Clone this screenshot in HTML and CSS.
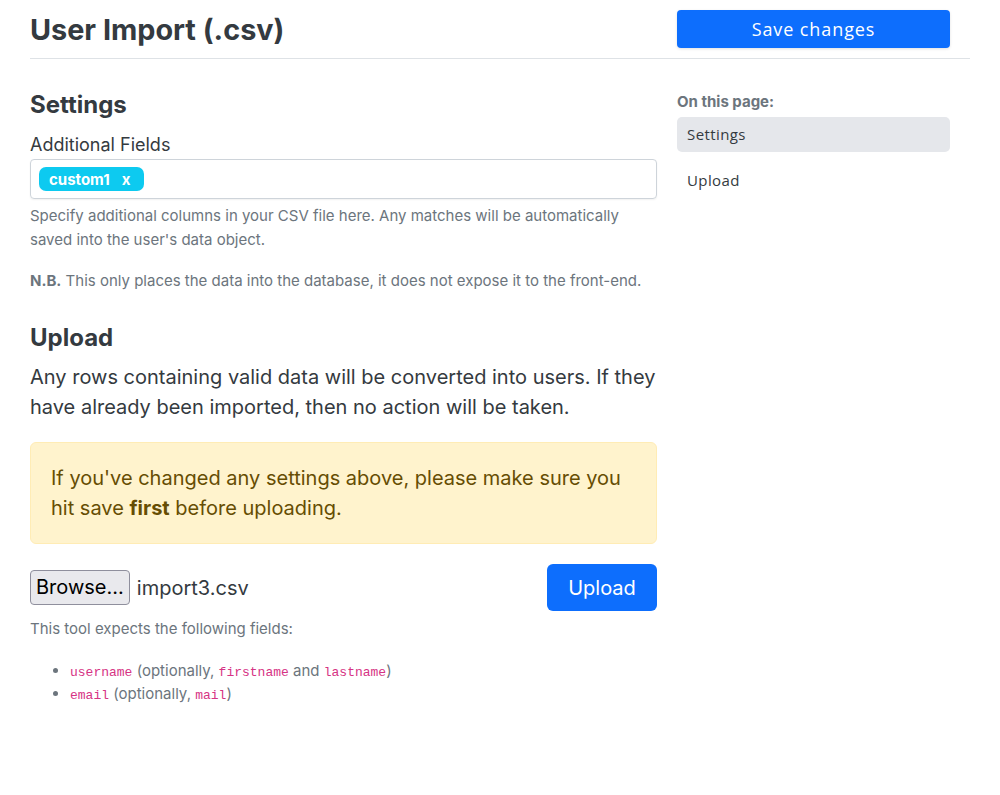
FILE: index.html
```html
<!DOCTYPE html>
<html>
<head>
<meta charset="utf-8">
<link rel="stylesheet" href="styles.css">
</head>
<body>
<div class="page">
  <header class="topbar">
    <h1 class="title">User Import (.csv)</h1>
    <button class="btn-save">Save changes</button>
  </header>
  <div class="layout">
    <main class="content">
      <h2 class="section-title">Settings</h2>
      <label class="field-label">Additional Fields</label>
      <div class="tag-input">
        <span class="tag">custom1 <span class="tag-x">x</span></span>
      </div>
      <p class="help">Specify additional columns in your CSV file here. Any matches will be automatically saved into the user's data object.</p>
      <p class="help nb"><strong>N.B.</strong> This only places the data into the database, it does not expose it to the front-end.</p>

      <h2 class="section-title upload-title">Upload</h2>
      <p class="lead">Any rows containing valid data will be converted into users. If they have already been imported, then no action will be taken.</p>
      <div class="alert">If you've changed any settings above, please make sure you hit save <strong>first</strong> before uploading.</div>
      <div class="file-row">
        <div class="file-pick">
          <span class="browse">Browse...</span>
          <span class="file-name">import3.csv</span>
        </div>
        <button class="btn-upload">Upload</button>
      </div>
      <p class="help expects">This tool expects the following fields:</p>
      <ul class="fields">
        <li><code>username</code> (optionally, <code>firstname</code> and <code>lastname</code>)</li>
        <li><code>email</code> (optionally, <code>mail</code>)</li>
      </ul>
    </main>
    <aside class="toc">
      <div class="toc-head">On this page:</div>
      <a class="toc-item active">Settings</a>
      <a class="toc-item">Upload</a>
    </aside>
  </div>
</div>
</body>
</html>
```

FILE: styles.css
```css
* { box-sizing: border-box; }
body {
  margin: 0;
  font-family: Inter, "Noto Sans", sans-serif;
  color: #343a40;
  background: #fff;
}
.page {
  width: 940px;
  margin-left: 30px;
}
.topbar {
  display: flex;
  align-items: center;
  justify-content: space-between;
  padding: 10px 20px 10px 0;
  border-bottom: 1px solid #dee2e6;
  height: 59px;
}
.title {
  margin: 0;
  font-size: 28.8px;
  font-weight: 700;
  color: #343a40;
}
.btn-save {
  width: 273px;
  height: 38px;
  border: none;
  border-radius: 4px;
  background: #0d6efd;
  color: #fff;
  font-family: "Open Sans", Inter, sans-serif;
  font-size: 18px;
  font-weight: 500;
  letter-spacing: 0.9px;
  box-shadow: 0 1px 3px rgba(0,0,0,0.12);
}
.layout {
  display: flex;
  gap: 20px;
}
.content {
  width: 627px;
  padding-top: 30px;
}
.section-title {
  margin: 0;
  font-size: 24px;
  font-weight: 700;
  line-height: 32px;
  color: #343a40;
}
.field-label {
  display: block;
  margin-top: 12px;
  font-size: 18px;
  line-height: 24px;
  color: #343a40;
}
.tag-input {
  margin-top: 2px;
  height: 40px;
  border: 1px solid #ced4da;
  border-radius: 4px;
  padding: 8px;
  display: flex;
  align-items: center;
  box-shadow: 0 1px 2px rgba(0,0,0,0.06);
}
.tag {
  display: inline-flex;
  align-items: center;
  height: 24px;
  padding: 0 14px 0 10px;
  border-radius: 7px;
  background: #0dcaf0;
  color: #fff;
  font-size: 15px;
  font-weight: 700;
}
.tag-x { margin-left: 12px; }
.help {
  margin: 5px 0 0;
  font-size: 15px;
  line-height: 24px;
  color: #6c757d;
}
.help.nb { margin-top: 17px; }
.help strong { font-weight: 700; }
.upload-title { margin-top: 29px; }
.lead {
  margin: 8px 0 0;
  font-size: 20px;
  line-height: 30px;
  color: #343a40;
}
.alert {
  margin-top: 20px;
  padding: 20px;
  background: #fff3cd;
  border: 1px solid #ffecb5;
  border-radius: 6px;
  color: #664d03;
  font-size: 20px;
  line-height: 30px;
}
.alert strong { font-weight: 700; }
.file-row {
  margin-top: 20px;
  display: flex;
  justify-content: space-between;
  align-items: center;
}
.file-pick {
  display: flex;
  align-items: center;
  gap: 7px;
}
.browse {
  display: inline-block;
  height: 35px;
  padding: 0 5px;
  line-height: 33px;
  border: 1px solid #8f8f9d;
  border-radius: 4px;
  background: #e9e9ed;
  color: #000;
  font-family: Inter, sans-serif;
  font-size: 20px;
}
.file-name {
  font-size: 20px;
  color: #343a40;
}
.btn-upload {
  width: 110px;
  height: 47px;
  border: none;
  border-radius: 6px;
  background: #0d6efd;
  color: #fff;
  font-family: Inter, sans-serif;
  font-size: 20px;
}
.expects { margin-top: 6px; }
.fields {
  margin: 18px 0 0;
  padding-left: 40px;
  font-size: 15px;
  line-height: 23px;
  color: #6c757d;
}
.fields li { height: 23px; }
.fields li::marker { color: #6c757d; }
code {
  font-family: "Liberation Mono", monospace;
  font-size: 13px;
  line-height: 1;
  color: #d63384;
}
.toc {
  width: 273px;
  padding-top: 33px;
}
.toc-head {
  font-size: 15px;
  font-weight: 700;
  color: #6c757d;
  line-height: 20px;
}
.toc-item {
  display: block;
  margin-top: 5px;
  height: 35px;
  padding: 0 10px;
  line-height: 35px;
  border-radius: 5px;
  font-family: "Open Sans", Inter, sans-serif;
  font-size: 15px;
  letter-spacing: 0.4px;
  color: #343a40;
}
.toc-item + .toc-item { margin-top: 11px; }
.toc-item.active { background: #e5e7eb; }
```
